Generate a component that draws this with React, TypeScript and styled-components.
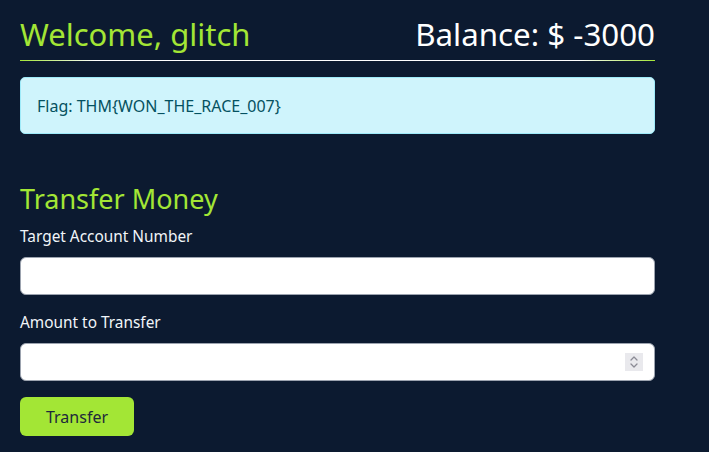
import React from "react";
import styled, { createGlobalStyle } from "styled-components";

const Global = createGlobalStyle`
  html, body { margin: 0; padding: 0; background: #0c1a30; }
  body { font-family: "Noto Sans", "Open Sans", sans-serif; color: #f1f5f9; }
  * { box-sizing: border-box; }
`;

const Page = styled.div`
  width: 709px;
  min-height: 452px;
  background: #0c1a30;
  padding: 14px 54px 0 20px;
`;

const Header = styled.header`
  display: flex;
  justify-content: space-between;
  align-items: flex-end;
  padding-bottom: 6px;
  border-bottom: 1px solid transparent;
  border-image: linear-gradient(90deg, #a3e635 0%, #ffffff 12%, #ffffff 88%, #a3e635 100%) 1;
`;

const Welcome = styled.h2`
  margin: 0;
  font-size: 31px;
  font-weight: 400;
  line-height: 40px;
  color: #a3e635;
`;

const Balance = styled.h2`
  margin: 0;
  font-size: 31.3px;
  font-weight: 400;
  line-height: 40px;
  color: #ffffff;
`;

const Alert = styled.div`
  margin-top: 16px;
  height: 57px;
  display: flex;
  align-items: center;
  padding: 0 16px;
  background: #cff4fc;
  border: 1px solid #9eeaf9;
  border-radius: 5px;
  color: #055160;
  font-size: 16px;
`;

const Section = styled.section`
  margin-top: 48px;
  display: flex;
  flex-direction: column;
`;

const Title = styled.h3`
  margin: 0;
  font-size: 27px;
  font-weight: 400;
  line-height: 34px;
  color: #a3e635;
`;

const Label = styled.label`
  display: block;
  margin-top: 10px;
  font-size: 15.4px;
  line-height: 22px;
  color: #f1f5f9;
`;

const Field = styled.div`
  position: relative;
  margin-top: 9px;
  margin-bottom: 7px;
`;

const Input = styled.input`
  display: block;
  width: 100%;
  height: 38px;
  padding: 0 36px 0 12px;
  background: #ffffff;
  border: 1px solid #9ca3af;
  border-radius: 6px;
  font-size: 15px;
  font-family: inherit;
  outline: none;
  -moz-appearance: textfield;

  &::-webkit-inner-spin-button,
  &::-webkit-outer-spin-button {
    -webkit-appearance: none;
    margin: 0;
  }
`;

const Spinner = styled.span`
  position: absolute;
  top: 10px;
  right: 12px;
  width: 18px;
  height: 18px;
  background: #e9e9ed;
  display: flex;
  align-items: center;
  justify-content: center;
  pointer-events: none;
`;

const Button = styled.button`
  margin-top: 9px;
  width: 114px;
  height: 39px;
  background: #a3e635;
  color: #1e293b;
  border: none;
  border-radius: 6px;
  font-family: inherit;
  font-size: 16px;
  cursor: pointer;
`;

export default function App() {
  return (
    <Page>
      <Global />
      <Header>
        <Welcome>Welcome, glitch</Welcome>
        <Balance>Balance: $ -3000</Balance>
      </Header>
      <Alert>Flag: THM{"{"}WON_THE_RACE_007{"}"}</Alert>
      <Section>
        <Title>Transfer Money</Title>
        <Label htmlFor="target">Target Account Number</Label>
        <Field>
          <Input id="target" type="text" />
        </Field>
        <Label htmlFor="amount">Amount to Transfer</Label>
        <Field>
          <Input id="amount" type="number" />
          <Spinner aria-hidden="true">
            <svg width="12" height="14" viewBox="0 0 12 14" fill="none" stroke="#8b8b95" strokeWidth="1.3" strokeLinecap="round" strokeLinejoin="round">
              <polyline points="3,5 6,2 9,5" />
              <polyline points="3,9 6,12 9,9" />
            </svg>
          </Spinner>
        </Field>
        <div>
          <Button type="button">Transfer</Button>
        </div>
      </Section>
    </Page>
  );
}
